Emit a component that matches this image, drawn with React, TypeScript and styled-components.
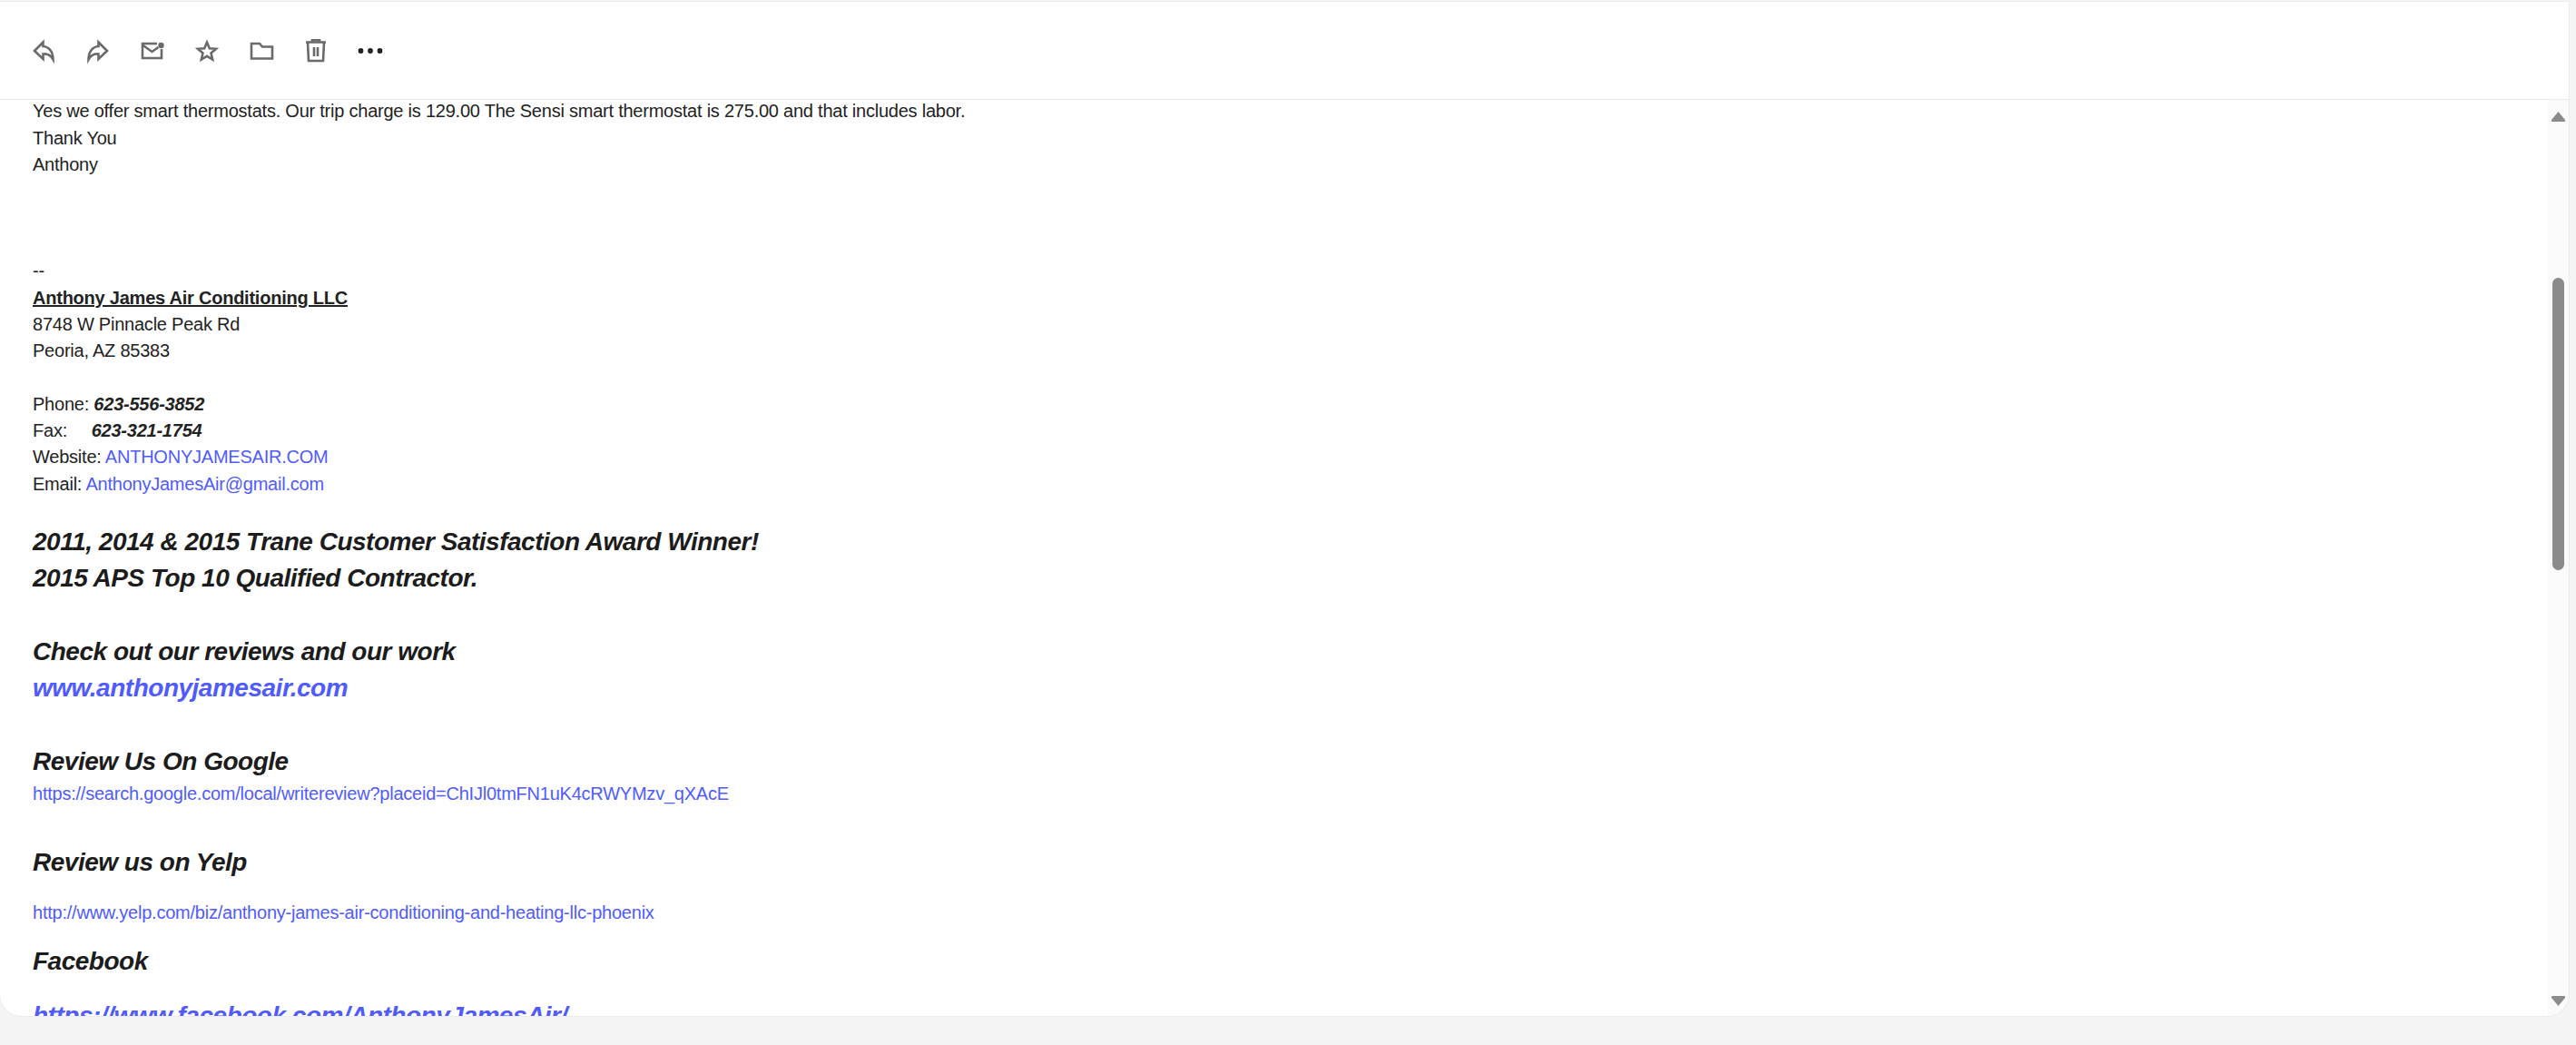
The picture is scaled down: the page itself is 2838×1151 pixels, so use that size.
import React from "react";
import styled, { createGlobalStyle } from "styled-components";

const GlobalStyle = createGlobalStyle`
  html, body {
    margin: 0;
    padding: 0;
    height: 100%;
    background: #f4f4f4;
    overflow: hidden;
  }
`;

const Page = styled.div`
  display: flex;
  flex-direction: column;
  width: 2838px;
  height: 1151px;
  padding: 2px 8px 32px 0;
  box-sizing: border-box;
  background: #f4f4f4;
`;

const Card = styled.main`
  flex: 1;
  min-height: 0;
  display: flex;
  flex-direction: column;
  background: #fff;
  border-radius: 0 0 24px 24px;
  box-shadow: 0 0 0 1px #ececec;
  overflow: hidden;
`;

const Toolbar = styled.div`
  display: flex;
  align-items: center;
  flex: 0 0 108px;
  box-sizing: border-box;
  padding: 0 0 0 32px;
  gap: 28px;
  border-bottom: 1px solid #ebebeb;
`;

const IconButton = styled.button`
  display: flex;
  align-items: center;
  justify-content: center;
  width: 32px;
  height: 32px;
  padding: 0;
  border: 0;
  background: none;
  color: #6a6a6a;
`;

const Content = styled.div`
  flex: 1;
  min-height: 0;
  display: flex;
`;

const Message = styled.article`
  flex: 1;
  min-width: 0;
  overflow: hidden;
  padding-left: 36px;
  margin-top: -2px;
  font-family: "Liberation Sans", Arial, sans-serif;
  font-size: 20px;
  letter-spacing: -0.23px;
  line-height: 29.3px;
  color: #222;
`;

const Block = styled.div<{ $gap?: number }>`
  margin-top: ${(p) => p.$gap ?? 0}px;
`;

const Company = styled.a`
  font-weight: 700;
  color: #222;
  text-decoration: underline;
`;

const Number = styled.b`
  font-style: italic;
`;

const Link = styled.a`
  color: #4f5bff;
  text-decoration: none;
`;

const Headline = styled.div<{ $gap?: number }>`
  margin-top: ${(p) => p.$gap ?? 0}px;
  font-size: 28px;
  letter-spacing: -0.49px;
  line-height: 40.4px;
  font-weight: 700;
  font-style: italic;
  color: #1c1c1c;
`;

const Track = styled.div`
  flex: 0 0 23px;
  display: flex;
  flex-direction: column;
  align-items: center;
  box-sizing: border-box;
  padding: 13px 0 11px;
  background: #fafafa;
`;

const Thumb = styled.div`
  width: 13px;
  height: 322px;
  margin-top: 172px;
  border-radius: 7px;
  background: #8b8b8b;
`;

const Arrow = styled.svg<{ $down?: boolean }>`
  display: block;
  margin-top: ${(p) => (p.$down ? "auto" : "0")};
  transform: ${(p) => (p.$down ? "rotate(180deg)" : "none")};
`;

const Icon = ({ children }: { children: React.ReactNode }) => (
  <svg width="32" height="32" viewBox="0 0 32 32" fill="none" stroke="currentColor" strokeWidth="2.6">
    {children}
  </svg>
);

const App = () => (
  <>
    <GlobalStyle />
    <Page>
      <Card>
        <Toolbar>
          <IconButton>
            <Icon>
              <path d="M15.500 6.500 L6 16 L15.500 25 V19.500 C20 19 24 21 26.500 25.500 C26.500 17 22 11.500 15.500 11 Z" />
            </Icon>
          </IconButton>
          <IconButton>
            <Icon>
              <path d="M16.500 6.500 L26 16 L16.500 25 V19.500 C12 19 8 21 5.500 25.500 C5.500 17 10 11.500 16.500 11 Z" />
            </Icon>
          </IconButton>
          <IconButton>
            <Icon>
              <path d="M21 8 H5 V24 H26 V14" />
              <path d="M5 9.500 L15.500 17 L22.500 12" />
              <circle cx="25.500" cy="10" r="3.200" fill="currentColor" stroke="none" />
            </Icon>
          </IconButton>
          <IconButton>
            <Icon>
              <path d="M16 6.500 L18.800 13.200 L26 13.800 L20.500 18.500 L22.200 25.500 L16 21.800 L9.800 25.500 L11.500 18.500 L6 13.800 L13.200 13.200 Z" />
            </Icon>
          </IconButton>
          <IconButton>
            <Icon>
              <path d="M5 8 H14 L17 11.500 H28 V24.500 H5 Z" />
            </Icon>
          </IconButton>
          <IconButton>
            <Icon>
              <path d="M5 6.500 H27" />
              <path d="M12 6 V4.200 H20 V6" />
              <path d="M7 6.500 L8 27 H24 L25 6.500" />
              <path d="M14 12 V22 M18 12 V22" />
            </Icon>
          </IconButton>
          <IconButton>
            <svg width="32" height="32" viewBox="0 0 32 32" fill="#222">
              <circle cx="5.500" cy="16" r="2.900" />
              <circle cx="16" cy="16" r="2.900" />
              <circle cx="26.500" cy="16" r="2.900" />
            </svg>
          </IconButton>
        </Toolbar>
        <Content>
          <Message>
            <div>Yes we offer smart thermostats. Our trip charge is 129.00 The Sensi smart thermostat is 275.00 and that includes labor.</div>
            <Block $gap={0.6}>Thank You</Block>
            <div>Anthony</div>
            <Block $gap={87.9}>--</Block>
            <div>
              <Company>Anthony James Air Conditioning LLC</Company>
            </div>
            <div>8748 W Pinnacle Peak Rd</div>
            <div>Peoria, AZ 85383</div>
            <Block $gap={29.3}>
              Phone: <Number>623-556-3852</Number>
            </Block>
            <div>
              Fax:&nbsp;&nbsp;&nbsp;&nbsp; <Number>623-321-1754</Number>
            </div>
            <div>
              Website: <Link>ANTHONYJAMESAIR.COM</Link>
            </div>
            <div>
              Email: <Link>AnthonyJamesAir@gmail.com</Link>
            </div>
            <Headline $gap={28.5}>2011, 2014 &amp; 2015 Trane Customer Satisfaction Award Winner!</Headline>
            <Headline>2015 APS Top 10 Qualified Contractor.</Headline>
            <Headline $gap={40.4}>Check out our reviews and our work</Headline>
            <Headline>
              <Link>www.anthonyjamesair.com</Link>
            </Headline>
            <Headline $gap={40.4}>Review Us On Google</Headline>
            <Block $gap={1}>
              <Link>https://search.google.com/local/writereview?placeid=ChIJl0tmFN1uK4cRWYMzv_qXAcE</Link>
            </Block>
            <Headline $gap={40.5}>Review us on Yelp</Headline>
            <Block $gap={20}>
              <Link>http://www.yelp.com/biz/anthony-james-air-conditioning-and-heating-llc-phoenix</Link>
            </Block>
            <Headline $gap={19}>Facebook</Headline>
            <Headline $gap={20}>
              <Link>https://www.facebook.com/AnthonyJamesAir/</Link>
            </Headline>
          </Message>
          <Track>
            <Arrow width="15" height="11" viewBox="0 0 15 11" fill="#8b8b8b">
              <path d="M7.500 0 L15 9 Q15.500 11 14 11 H1 Q-0.500 11 0 9 Z" />
            </Arrow>
            <Thumb />
            <Arrow $down width="15" height="11" viewBox="0 0 15 11" fill="#8b8b8b">
              <path d="M7.500 0 L15 9 Q15.500 11 14 11 H1 Q-0.500 11 0 9 Z" />
            </Arrow>
          </Track>
        </Content>
      </Card>
    </Page>
  </>
);

export default App;
